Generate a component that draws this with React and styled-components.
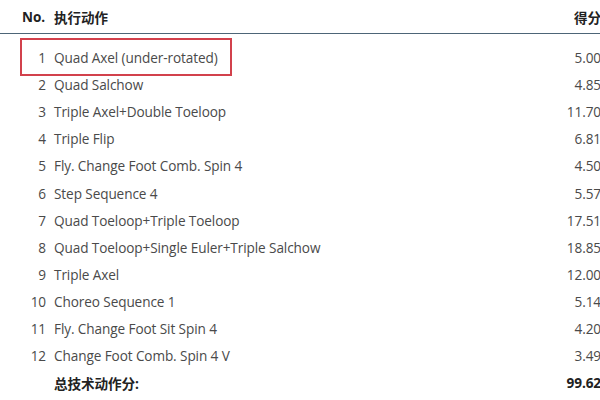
import styled, { createGlobalStyle } from "styled-components";

const GlobalStyle = createGlobalStyle`
  html, body {
    margin: 0;
    padding: 0;
    background: #fff;
    overflow: hidden;
  }
  body {
    font-family: "Open Sans", "Noto Sans CJK SC", sans-serif;
  }
`;

const Table = styled.div`
  width: 601px;
  display: flex;
  flex-direction: column;
`;

const HeaderRow = styled.div`
  display: grid;
  grid-template-columns: 46px 1fr 80px;
  column-gap: 8px;
  align-items: center;
  height: 33px;
  border-bottom: 1px solid #4d6577;
  font-weight: bold;
  font-size: 13.5px;
  color: #222;
  margin-bottom: 10px;
`;

const HeadNo = styled.span`
  padding-left: 22px;
`;

const Row = styled.div`
  position: relative;
  display: grid;
  grid-template-columns: 46px 1fr 80px;
  column-gap: 8px;
  align-items: center;
  height: 27.1px;
  font-size: 13.6px;
  letter-spacing: -0.1px;
  color: ${(p) => (p.$total ? "#222" : "#4a4a4a")};
  font-weight: ${(p) => (p.$total ? "bold" : "normal")};

  ${(p) =>
    p.$marked &&
    `
    &::after {
      content: "";
      position: absolute;
      left: 20px;
      top: -6px;
      width: 208px;
      height: 34px;
      border: 2px solid #d2414c;
    }
  `}
`;

const Num = styled.span`
  text-align: right;
`;

const Score = styled.span`
  text-align: right;
`;

const rows = [
  ["1", "Quad Axel (under-rotated)", "5.00"],
  ["2", "Quad Salchow", "4.85"],
  ["3", "Triple Axel+Double Toeloop", "11.70"],
  ["4", "Triple Flip", "6.81"],
  ["5", "Fly. Change Foot Comb. Spin 4", "4.50"],
  ["6", "Step Sequence 4", "5.57"],
  ["7", "Quad Toeloop+Triple Toeloop", "17.51"],
  ["8", "Quad Toeloop+Single Euler+Triple Salchow", "18.85"],
  ["9", "Triple Axel", "12.00"],
  ["10", "Choreo Sequence 1", "5.14"],
  ["11", "Fly. Change Foot Sit Spin 4", "4.20"],
  ["12", "Change Foot Comb. Spin 4 V", "3.49"],
];

export default function App() {
  return (
    <>
      <GlobalStyle />
      <Table>
        <HeaderRow>
          <HeadNo>No.</HeadNo>
          <span>执行动作</span>
          <Score>得分</Score>
        </HeaderRow>
        {rows.map(([n, name, score], i) => (
          <Row key={n} $marked={i === 0}>
            <Num>{n}</Num>
            <span>{name}</span>
            <Score>{score}</Score>
          </Row>
        ))}
        <Row $total>
          <span />
          <span>总技术动作分:</span>
          <Score>99.62</Score>
        </Row>
      </Table>
    </>
  );
}
